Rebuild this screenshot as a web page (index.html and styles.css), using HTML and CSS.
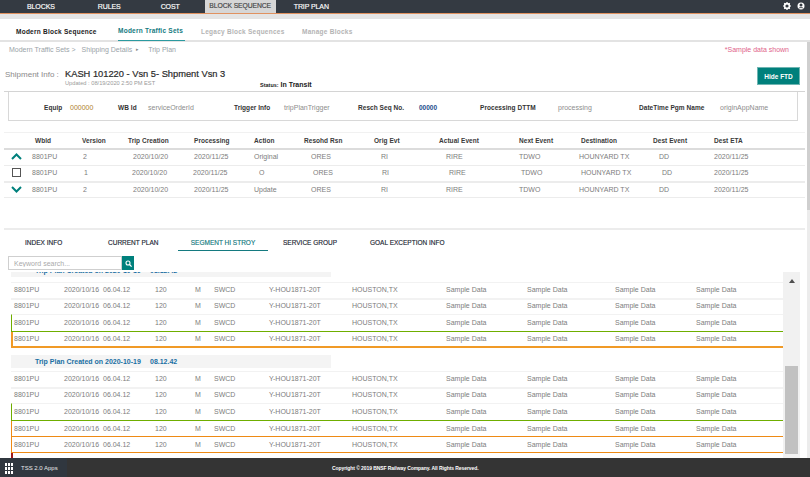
FILE: index.html
```html
<!DOCTYPE html>
<html lang="en">
<head>
<meta charset="utf-8">
<title>Trip Plan</title>
<link rel="stylesheet" href="styles.css">
</head>
<body>
<div class="page">
  <header class="topbar">
    <nav class="topnav">
      <a class="tn tn-blocks">BLOCKS</a>
      <a class="tn tn-rules">RULES</a>
      <a class="tn tn-cost">COST</a>
      <a class="tn tn-seq active">BLOCK SEQUENCE</a>
      <a class="tn tn-trip">TRIP PLAN</a>
    </nav>
    <div class="topicons">
      <svg width="8" height="8" viewBox="0 0 8 8"><circle cx="4" cy="4" r="2.4" fill="none" stroke="#fff" stroke-width="1.6"/><path d="M4 0v1.5M4 6.5V8M0 4h1.5M6.5 4H8M1.2 1.2l1 1M5.8 5.8l1 1M1.2 6.8l1-1M5.8 2.2l1-1" stroke="#fff" stroke-width="1.2"/></svg>
      <svg width="8" height="8" viewBox="0 0 8 8"><circle cx="4" cy="4" r="3.5" fill="#fff"/><circle cx="4" cy="3.1" r="1.5" fill="#343a42"/><path d="M1.5 6.6c.6-1.4 4.4-1.4 5 0" fill="none" stroke="#343a42" stroke-width=".9"/></svg>
    </div>
  </header>
  <div class="band"></div>
  <nav class="subtabs">
    <a class="st st-a">Modern Block Sequence</a>
    <a class="st st-b active">Modern Traffic Sets</a>
    <a class="st st-c muted">Legacy Block Sequences</a>
    <a class="st st-d muted">Manage Blocks</a>
  </nav>
  <main class="main">
    <div class="crumbs">
      <span class="crumb-1">Modern Traffic Sets &gt;</span>
      <span class="crumb-2">Shipping Details</span>
      <span class="crumb-sep">&#9656;</span>
      <span class="crumb-3">Trip Plan</span>
      <span class="sample-note">*Sample data shown</span>
    </div>
    <section class="shipment">
      <div class="ship-label">Shipment Info :</div>
      <div class="ship-title">
        <h1>KASH 101220 - Vsn 5- Shpment Vsn 3</h1>
        <div class="ship-sub">
          <span class="updated">Updated : 08/19/2020 2:50 PM EST</span>
          <span class="status"><small>Status:</small> In Transit</span>
        </div>
      </div>
      <button class="hide-btn">Hide FTD</button>
    </section>
    <div class="info-wrap">
      <div class="info-box">
        <b>Equip</b><span class="gold">000000</span>
        <b>WB Id</b><span>serviceOrderId</span>
        <b>Trigger Info</b><span>tripPlanTrigger</span>
        <b>Resch Seq No.</b><span class="blue">00000</span>
        <b>Processing DTTM</b><span>processing</span>
        <b>DateTime Pgm Name</b><span>originAppName</span>
      </div>
    </div>
    <section class="versions">
      <div class="vrow vhead">
        <span></span><b>Wbld</b><b>Version</b><b>Trip Creation</b><b>Processing</b><b>Action</b><b>Resohd Rsn</b><b>Orig Evt</b><b>Actual Event</b><b>Next Event</b><b>Destination</b><b>Dest Event</b><b>Dest ETA</b>
      </div>
      <div class="vrow vbody v1">
        <svg class="ic" width="11" height="7" viewBox="0 0 11 7"><path d="M1 6l4.5-4.5L10 6" fill="none" stroke="#00807c" stroke-width="2"/></svg>
        <span>8801PU</span><span>2</span><span>2020/10/20</span><span>2020/11/25</span><span>Original</span><span>ORES</span><span>RI</span><span>RIRE</span><span>TDWO</span><span>HOUNYARD TX</span><span>DD</span><span>2020/11/25</span>
      </div>
      <div class="vrow vbody v2">
        <i class="check"></i>
        <span>8801PU</span><span>1</span><span>2020/10/20</span><span>2020/11/25</span><span>O</span><span>ORES</span><span>RI</span><span>RIRE</span><span>TDWO</span><span>HOUNYARD TX</span><span>DD</span><span>2020/11/25</span>
      </div>
      <div class="vrow vbody v3">
        <svg class="ic" width="11" height="7" viewBox="0 0 11 7"><path d="M1 1l4.5 4.5L10 1" fill="none" stroke="#00807c" stroke-width="2"/></svg>
        <span>8801PU</span><span>2</span><span>2020/10/20</span><span>2020/11/25</span><span>Update</span><span>ORES</span><span>RI</span><span>RIRE</span><span>TDWO</span><span>HOUNYARD TX</span><span>DD</span><span>2020/11/25</span>
      </div>
    </section>
    <nav class="lowtabs">
      <a class="lt lt-1">INDEX INFO</a>
      <a class="lt lt-2">CURRENT PLAN</a>
      <a class="lt lt-3 active">SEGMENT HI STROY</a>
      <a class="lt lt-4">SERVICE GROUP</a>
      <a class="lt lt-5">GOAL EXCEPTION INFO</a>
    </nav>
    <div class="search">
      <input class="search-input" placeholder="Keyword search...">
      <button class="search-btn"><svg width="7" height="7" viewBox="0 0 7 7"><circle cx="3" cy="3" r="2" fill="none" stroke="#fff" stroke-width="1.1"/><path d="M4.5 4.5L6.6 6.6" stroke="#fff" stroke-width="1.2"/></svg></button>
    </div>
    <section class="history">
      <div class="hist-list">
        <div class="plan-head clipped"><span class="ph-a">Trip Plan Created on 2020-10-19</span><span class="ph-b">08.12.42</span></div>
        <div class="hrow r-line"><span>8801PU</span><span>2020/10/16</span><span>06.04.12</span><span>120</span><span>M</span><span>SWCD</span><span>Y-HOU1871-20T</span><span>HOUSTON,TX</span><span>Sample Data</span><span>Sample Data</span><span>Sample Data</span><span>Sample Data</span></div>
        <div class="hrow r-thick"><span>8801PU</span><span>2020/10/16</span><span>06.04.12</span><span>120</span><span>M</span><span>SWCD</span><span>Y-HOU1871-20T</span><span>HOUSTON,TX</span><span>Sample Data</span><span>Sample Data</span><span>Sample Data</span><span>Sample Data</span></div>
        <div class="hrow r-green"><span>8801PU</span><span>2020/10/16</span><span>06.04.12</span><span>120</span><span>M</span><span>SWCD</span><span>Y-HOU1871-20T</span><span>HOUSTON,TX</span><span>Sample Data</span><span>Sample Data</span><span>Sample Data</span><span>Sample Data</span></div>
        <div class="hrow r-orange-thick"><span>8801PU</span><span>2020/10/16</span><span>06.04.12</span><span>120</span><span>M</span><span>SWCD</span><span>Y-HOU1871-20T</span><span>HOUSTON,TX</span><span>Sample Data</span><span>Sample Data</span><span>Sample Data</span><span>Sample Data</span></div>
        <div class="plan-head second"><span class="ph-a">Trip Plan Created on 2020-10-19</span><span class="ph-b">08.12.42</span></div>
        <div class="hrow r-line"><span>8801PU</span><span>2020/10/16</span><span>06.04.12</span><span>120</span><span>M</span><span>SWCD</span><span>Y-HOU1871-20T</span><span>HOUSTON,TX</span><span>Sample Data</span><span>Sample Data</span><span>Sample Data</span><span>Sample Data</span></div>
        <div class="hrow r-thick"><span>8801PU</span><span>2020/10/16</span><span>06.04.12</span><span>120</span><span>M</span><span>SWCD</span><span>Y-HOU1871-20T</span><span>HOUSTON,TX</span><span>Sample Data</span><span>Sample Data</span><span>Sample Data</span><span>Sample Data</span></div>
        <div class="hrow r-green"><span>8801PU</span><span>2020/10/16</span><span>06.04.12</span><span>120</span><span>M</span><span>SWCD</span><span>Y-HOU1871-20T</span><span>HOUSTON,TX</span><span>Sample Data</span><span>Sample Data</span><span>Sample Data</span><span>Sample Data</span></div>
        <div class="hrow r-orange"><span>8801PU</span><span>2020/10/16</span><span>06.04.12</span><span>120</span><span>M</span><span>SWCD</span><span>Y-HOU1871-20T</span><span>HOUSTON,TX</span><span>Sample Data</span><span>Sample Data</span><span>Sample Data</span><span>Sample Data</span></div>
        <div class="hrow r-orange"><span>8801PU</span><span>2020/10/16</span><span>06.04.12</span><span>120</span><span>M</span><span>SWCD</span><span>Y-HOU1871-20T</span><span>HOUSTON,TX</span><span>Sample Data</span><span>Sample Data</span><span>Sample Data</span><span>Sample Data</span></div>
        <div class="red-stub"></div>
      </div>
      <div class="hist-scroll">
        <i class="arrow-up"></i>
        <i class="thumb"></i>
      </div>
    </section>
    <div class="page-scroll"><i class="page-thumb"></i></div>
  </main>
  <footer class="footer">
    <div class="apps">
      <svg width="8" height="11" viewBox="0 0 8 11" fill="#fff"><rect width="2" height="3"/><rect x="3" width="2" height="3"/><rect x="6" width="2" height="3"/><rect y="4" width="2" height="3"/><rect x="3" y="4" width="2" height="3"/><rect x="6" y="4" width="2" height="3"/><rect y="8" width="2" height="3"/><rect x="3" y="8" width="2" height="3"/><rect x="6" y="8" width="2" height="3"/></svg>
      <span>TSS 2.0 Apps</span>
    </div>
    <div class="copyright">Copyright &copy; 2019 BNSF Railway Company. All Rights Reserved.</div>
  </footer>
</div>
</body>
</html>
```
FILE: styles.css
```css
* { box-sizing: border-box; }
html, body { margin: 0; padding: 0; }
body { font-family: "Liberation Sans", Arial, sans-serif; font-size: 7px; color: #6f6f6f; background: #fff; overflow: hidden; }
.page { width: 810px; height: 477px; display: flex; flex-direction: column; overflow: hidden; position: relative; }
a { display: block; }

.topbar { height: 14px; flex: none; background: #343a42; border-bottom: 1px solid #e0915f; display: flex; justify-content: space-between; align-items: flex-start; }
.topnav { display: flex; height: 13px; }
.tn { color: #fff; font-size: 7px; line-height: 13px; letter-spacing: -.1px; -webkit-text-stroke: .15px #fff; }
.tn-blocks { margin-left: 27px; }
.tn-rules { margin-left: 43px; }
.tn-cost { margin-left: 40px; }
.tn-seq { margin-left: 25px; width: 71px; font-size: 6.8px; text-align: center; height: 13px; background: #d6d6d6; color: #444; line-height: 11px; white-space: nowrap; -webkit-text-stroke: .15px #444; }
.tn-trip { margin-left: 18px; }
.topicons { display: flex; gap: 6px; padding: 2px 5px 0 0; }
.topicons svg { display: block; }

.band { height: 5px; flex: none; background: #e4e4e4; }

.subtabs { height: 23px; flex: none; display: flex; border-bottom: 2px solid #e3e3e3; background: #fff; }
.st { font-size: 6.5px; font-weight: 700; line-height: 8px; color: #222; letter-spacing: .25px; padding-top: 9px; white-space: nowrap; }
.st-a { margin-left: 16px; width: 102px; }
.st-b { width: 67px; height: 22px; color: #147a80; padding: 8px 0 0 0; border-bottom: 1px solid #2b9aa0; }
.st-c { margin-left: 16px; width: 101px; }
.muted { color: #b4b4b4; }

.main { flex: 1; min-height: 0; display: flex; flex-direction: column; position: relative; }

.crumbs { height: 9px; margin-top: 3px; display: flex; font-size: 7px; line-height: 9px; color: #9aa3a8; flex: none; }
.crumb-1 { margin-left: 9px; }
.crumb-2 { margin-left: 6px; }
.crumb-sep { margin-left: 4px; font-size: 5px; color: #888; }
.crumb-3 { margin-left: 9px; }
.sample-note { margin-left: auto; margin-right: 21px; color: #e0638a; }

.shipment { height: 27px; margin-top: 7px; flex: none; display: flex; }
.ship-label { margin-left: 5px; width: 60px; font-size: 8px; line-height: 9px; padding-top: 9px; color: #8a8a8a; white-space: nowrap; }
.ship-title { flex: 1; padding-top: 7px; }
.ship-title h1 { margin: 0; font-size: 9.3px; line-height: 12px; font-weight: 400; color: #2a2a2a; -webkit-text-stroke: .2px #2a2a2a; white-space: nowrap; }
.ship-sub { display: flex; line-height: 7px; }
.updated { font-size: 5.7px; color: #9a9a9a; width: 195px; line-height: 6px; white-space: nowrap; }
.status { font-size: 7px; font-weight: 700; color: #222; line-height: 7px; padding-top: 1px; white-space: nowrap; }
.status small { font-size: 5.5px; }
.hide-btn { width: 43px; height: 18px; margin: 6px 10px 0 0; background: #00807c; border: 1px solid #6fb5b2; color: #fff; font: 700 6.5px "Liberation Sans", Arial, sans-serif; padding: 0; }

.info-wrap { margin: 3px 5px 0 4px; border-top: 1px solid #d4d4d4; padding: 0 7px 0 4px; flex: none; }
.info-box { height: 29px; border: 1px solid #d8d8d8; border-top: 0; display: grid; grid-template-columns: 26px 48px 30px 86px 50px 74px 61px 61px 78px 81px 81px auto; align-items: center; padding: 2px 0 0 35px; font-size: 7px; }
.info-box b { color: #333; font-size: 6.5px; letter-spacing: .05px; white-space: nowrap; }
.info-box span { color: #8d8d8d; white-space: nowrap; }
.info-box .gold { color: #b0812d; }
.info-box .blue { color: #1c4d8c; font-weight: 700; font-size: 6.5px; }

.versions { margin: 11px 5px 0 4px; flex: none; }
.vrow { display: grid; align-items: center; white-space: nowrap; }
.vhead { height: 18px; border-top: 1px solid #f1f1f1; border-bottom: 2px solid #dcdcdc; grid-template-columns: 31px 47px 46px 66px 60px 50px 70px 65px 80px 62px 72px 61px auto; padding-bottom: 1px; }
.vhead b { font-size: 6.5px; color: #3a3a3a; letter-spacing: .05px; }
.vbody { height: 16px; color: #7d7d7d; border-bottom: 1px solid #ececec; }
.v1, .v3 { grid-template-columns: 28px 51px 50px 61px 60px 57px 70px 65px 73px 60px 80px 55px auto; }
.v1 { padding-bottom: 2px; }
.v2 { grid-template-columns: 28px 52px 48px 61px 66px 54px 69px 67px 72px 60px 81px 52px auto; height: 17px; border-bottom: 2px solid #ececec; padding-bottom: 2px; }
.v3 { height: 15px; padding-bottom: 2px; }
.ic { margin-left: 7px; display: block; }
.check { display: block; width: 9px; height: 9px; margin-left: 8px; border: 1px solid #555; background: #fff; }

.lowtabs { margin: 30px 5px 0 4px; height: 23px; flex: none; display: flex; border-top: 2px solid #ececec; }
.lt { font-size: 6.5px; line-height: 8px; color: #1c2733; -webkit-text-stroke: .15px #1c2733; padding-top: 9px; height: 21px; white-space: nowrap; }
.lt-1 { margin-left: 21px; width: 83px; }
.lt-2 { width: 70px; }
.lt-3 { width: 90px; text-align: center; color: #147a80; -webkit-text-stroke: .15px #147a80; border-bottom: 1px solid #147a80; }
.lt-4 { margin-left: 15px; width: 87px; }

.search { margin: 5px 0 0 8px; height: 15px; flex: none; display: flex; }
.search-input { width: 114px; height: 14px; border: 1px solid #cfcfcf; padding: 0 5px; font: 7px "Liberation Sans", Arial, sans-serif; color: #888; outline: 0; }
.search-input::placeholder { color: #aaa; }
.search-btn { width: 12px; height: 14px; background: #00807c; border: 0; padding: 0; display: flex; align-items: center; justify-content: center; }

.history { margin-top: 1px; height: 186px; flex: none; display: flex; padding: 0 10px 0 11px; overflow: hidden; }
.hist-list { flex: 1; min-width: 0; overflow: hidden; }
.plan-head { width: 320px; height: 13px; background: #f4f4f4; color: #1a6fa3; font-weight: 700; font-size: 7px; line-height: 13px; display: flex; white-space: nowrap; }
.plan-head.clipped { margin-top: -8px; margin-bottom: 5px; }
.plan-head.second { margin-top: 7px; margin-bottom: 3px; }
.ph-a { margin-left: 24px; width: 115px; }
.hrow { display: grid; grid-template-columns: 50px 39px 52px 40px 19px 55px 83px 94px 81px 88px 81px auto; align-items: center; padding-left: 3px; height: 16px; white-space: nowrap; color: #7d7d7d; }
.r-line { border-top: 1px solid #f2f2f2; padding-bottom: 2px; }
.r-thick { border-top: 2px solid #f2f2f2; padding-bottom: 3px; }
.r-green { border-top: 1px solid #f2f2f2; border-left: 1px solid #6fae00; border-bottom: 1px solid #6fae00; height: 18px; padding: 0 0 2px 2px; }
.r-orange-thick { border-left: 2px solid #f09a26; border-bottom: 2px solid #f09a26; height: 16px; padding: 0 0 1px 1px; }
.r-orange { border-left: 1px solid #ee8a14; border-bottom: 1px solid #ee8a14; padding: 0 0 1px 2px; }
.red-stub { width: 2px; height: 5px; background: #a01818; }

.hist-scroll { width: 17px; flex: none; background: #f1f1f1; padding: 7px 2px 4px; display: flex; flex-direction: column; justify-content: space-between; align-items: center; }
.arrow-up { width: 0; height: 0; border-left: 3.5px solid transparent; border-right: 3.5px solid transparent; border-bottom: 4px solid #505050; }
.thumb { width: 13px; height: 88px; background: #c1c1c1; }

.page-scroll { position: absolute; top: 0; right: 0; bottom: 0; width: 3px; background: #ececec; }
.page-thumb { display: block; height: 168px; background: #cfcfcf; }

.footer { height: 19px; flex: none; background: #343434; display: flex; align-items: center; }
.apps { width: 67px; height: 19px; background: #30373f; display: flex; align-items: center; gap: 8px; padding: 0 0 0 5px; color: #e8e8e8; font-size: 6px; white-space: nowrap; }
.apps svg { margin-top: 2px; }
.apps span { margin-top: 1px; }
.copyright { margin-left: 265px; color: #fff; font-size: 5px; font-weight: 700; letter-spacing: -.08px; white-space: nowrap; margin-top: 1px; }
```
